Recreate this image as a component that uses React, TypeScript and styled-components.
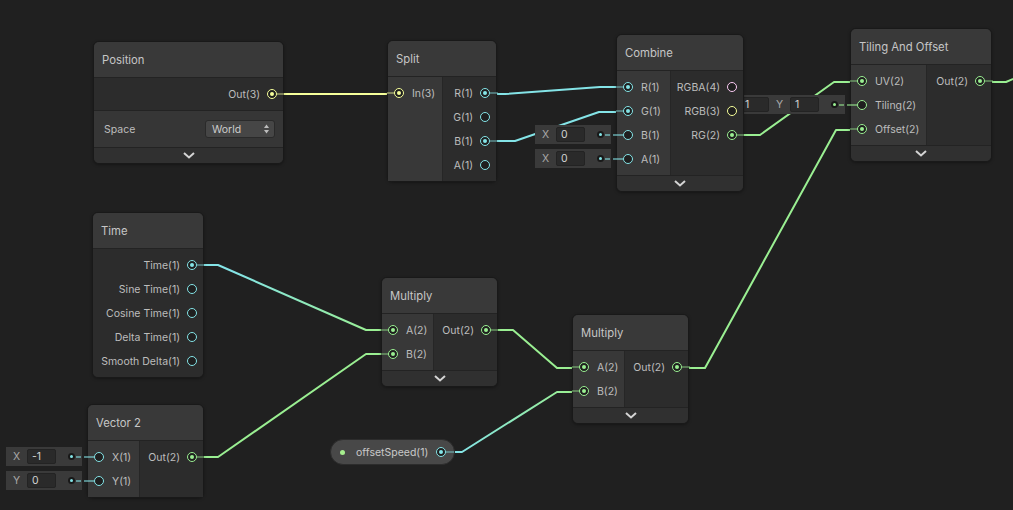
import React from 'react';
import styled, { createGlobalStyle, css } from 'styled-components';

const CYAN = '#84e4e7';
const GREEN = '#9aef92';
const YELLOW = '#f6ff9a';
const PINK = '#fbcbf4';

const GlobalStyle = createGlobalStyle`
  html, body {
    margin: 0;
    padding: 0;
    background: #202020;
  }
  body {
    font-family: Inter, "Noto Sans", sans-serif;
  }
`;

const Canvas = styled.div`
  position: relative;
  width: 1013px;
  height: 510px;
  overflow: hidden;
  background: #202020;
  font-size: 10.5px;
  color: #bdbdbd;
`;

const EdgeLayer = styled.svg`
  position: absolute;
  left: 0;
  top: 0;
`;

const NodeBox = styled.div<{ $x: number; $y: number; $w: number }>`
  position: absolute;
  left: ${({ $x }) => $x}px;
  top: ${({ $y }) => $y}px;
  width: ${({ $w }) => $w}px;
  box-sizing: border-box;
  border: 1px solid #191919;
  border-radius: 6px;
  background: #2e2e2e;
  display: flex;
  flex-direction: column;
  box-shadow: 0 1px 3px rgba(0, 0, 0, 0.35);
`;

const Title = styled.div`
  height: 35px;
  display: flex;
  align-items: center;
  padding-left: 8px;
  background: #393939;
  border-bottom: 1px solid #232323;
  border-radius: 5px 5px 0 0;
  font-size: 11.3px;
  color: #c6c6c6;
`;

const Body = styled.div`
  display: flex;
`;

const InputCol = styled.div<{ $w: number }>`
  width: ${({ $w }) => $w}px;
  flex: none;
  box-sizing: border-box;
  padding: 4px 0;
  background: #383838;
  border-right: 1px solid #262626;
`;

const OutputCol = styled.div<{ $last?: boolean }>`
  flex: 1;
  padding: 4px 0;
  background: #2c2c2c;
  ${({ $last }) =>
    $last &&
    css`
      border-radius: 0 0 5px 5px;
    `}
`;

const InputRow = styled.div`
  position: relative;
  height: 24px;
  display: flex;
  align-items: center;
  gap: 8px;
  padding-left: 6px;
`;

const OutputRow = styled.div`
  height: 24px;
  display: flex;
  align-items: center;
  justify-content: flex-end;
  gap: 7px;
  padding-right: 6px;
`;

const PortRing = styled.span<{ $c: string; $linked?: boolean; $side: 'in' | 'out' }>`
  position: relative;
  flex: none;
  width: 10px;
  height: 10px;
  box-sizing: border-box;
  border-radius: 50%;
  border: 1.5px solid ${({ $c }) => $c};
  background: #1f1f1f;
  display: flex;
  align-items: center;
  justify-content: center;
  &::before {
    content: '';
    width: 4px;
    height: 4px;
    border-radius: 50%;
    background: ${({ $c, $linked }) => ($linked ? $c : 'transparent')};
  }
  ${({ $linked, $c, $side }) =>
    $linked &&
    css`
      &::after {
        content: '';
        position: absolute;
        top: 3px;
        width: 8px;
        height: 2px;
        background: ${$c}66;
        ${$side === 'out' ? 'left: 8.5px;' : 'right: 8.5px;'}
      }
    `}
`;

const FieldBox = styled.div`
  position: absolute;
  right: calc(100% + 6px);
  top: 2px;
  height: 19px;
  display: flex;
  align-items: center;
  padding-right: 7px;
  background: #3a3a3a;
`;

const FieldLabel = styled.span`
  width: 21px;
  text-align: center;
  color: #a8a8a8;
`;

const FieldInput = styled.span`
  width: 29px;
  height: 15px;
  box-sizing: border-box;
  padding-left: 4px;
  line-height: 13px;
  background: #2a2a2a;
  border: 1px solid #232323;
  border-radius: 2px;
  color: #d2d2d2;
`;

const FieldDot = styled.span<{ $c: string }>`
  position: relative;
  margin-left: 12px;
  width: 7px;
  height: 7px;
  border-radius: 50%;
  background: #181818;
  display: flex;
  align-items: center;
  justify-content: center;
  &::before {
    content: '';
    width: 3px;
    height: 3px;
    border-radius: 50%;
    background: ${({ $c }) => $c};
  }
  &::after {
    content: '';
    position: absolute;
    left: 8px;
    top: 2.5px;
    width: 18px;
    height: 2px;
    background: linear-gradient(
      to right,
      ${({ $c }) => $c}88 0 5px,
      transparent 5px 8px,
      ${({ $c }) => $c}88 8px
    );
  }
`;

const SettingsRow = styled.div`
  height: 36px;
  display: flex;
  align-items: center;
  justify-content: space-between;
  padding: 0 8px 0 10px;
  background: #363636;
  border-top: 1px solid #232323;
`;

const Dropdown = styled.div`
  width: 70px;
  height: 18px;
  box-sizing: border-box;
  display: flex;
  align-items: center;
  justify-content: space-between;
  padding: 0 5px 0 6px;
  background: #464646;
  border: 1px solid #2a2a2a;
  border-radius: 3px;
  color: #cccccc;
`;

const CollapseBar = styled.div`
  height: 15px;
  display: flex;
  align-items: center;
  justify-content: center;
  background: #303030;
  border-top: 1px solid #232323;
  border-radius: 0 0 5px 5px;
`;

const Pill = styled.div`
  position: absolute;
  left: 330px;
  top: 439px;
  width: 125px;
  height: 26px;
  box-sizing: border-box;
  display: flex;
  align-items: center;
  padding: 0 8px 0 9px;
  border-radius: 13px;
  background: #484848;
  border: 1px solid #2c2c2c;
`;

const PillDot = styled.span`
  width: 5px;
  height: 5px;
  border-radius: 50%;
  background: #a6ee8e;
  margin-right: 11px;
`;

const PillLabel = styled.span`
  flex: 1;
  color: #c8c8c8;
`;

interface Field {
  label: string;
  value: string;
}

interface PortDef {
  label: string;
  color: string;
  linked?: boolean;
  fields?: Field[];
}

interface NodeProps {
  x: number;
  y: number;
  w: number;
  title: string;
  inW?: number;
  inputs?: PortDef[];
  outputs: PortDef[];
  collapse?: boolean;
  settings?: React.ReactNode;
}

const Chevron = () => (
  <svg width="12" height="7" viewBox="0 0 12 7">
    <polyline points="1,1 6,5.5 11,1" fill="none" stroke="#d4d4d4" strokeWidth="2" />
  </svg>
);

const UpDown = () => (
  <svg width="5" height="10" viewBox="0 0 5 10">
    <polygon points="2.5,0.5 5,4 0,4" fill="#bdbdbd" />
    <polygon points="0,6 5,6 2.5,9.5" fill="#bdbdbd" />
  </svg>
);

const Node: React.FC<NodeProps> = ({ x, y, w, title, inW, inputs, outputs, collapse, settings }) => (
  <NodeBox $x={x} $y={y} $w={w}>
    <Title>{title}</Title>
    <Body>
      {inputs && inW && (
        <InputCol $w={inW}>
          {inputs.map((p) => (
            <InputRow key={p.label}>
              {p.fields && (
                <FieldBox>
                  {p.fields.map((f) => (
                    <React.Fragment key={f.label}>
                      <FieldLabel>{f.label}</FieldLabel>
                      <FieldInput>{f.value}</FieldInput>
                    </React.Fragment>
                  ))}
                  <FieldDot $c={p.color} />
                </FieldBox>
              )}
              <PortRing $c={p.color} $linked={p.linked} $side="in" />
              <span>{p.label}</span>
            </InputRow>
          ))}
        </InputCol>
      )}
      <OutputCol $last={!collapse && !settings && !inputs}>
        {outputs.map((p) => (
          <OutputRow key={p.label}>
            <span>{p.label}</span>
            <PortRing $c={p.color} $linked={p.linked} $side="out" />
          </OutputRow>
        ))}
      </OutputCol>
    </Body>
    {settings}
    {collapse && (
      <CollapseBar>
        <Chevron />
      </CollapseBar>
    )}
  </NodeBox>
);

const Edge: React.FC<{ d: string; stroke: string }> = ({ d, stroke }) => (
  <path d={d} fill="none" stroke={stroke} strokeWidth={2} strokeLinejoin="round" />
);

const Edges = () => (
  <EdgeLayer width={1013} height={510}>
    <defs>
      <linearGradient id="timeGrad" gradientUnits="userSpaceOnUse" x1="192" y1="0" x2="393" y2="0">
        <stop offset="0.2" stopColor={CYAN} />
        <stop offset="0.9" stopColor={GREEN} />
      </linearGradient>
      <linearGradient id="speedGrad" gradientUnits="userSpaceOnUse" x1="436" y1="0" x2="584" y2="0">
        <stop offset="0.15" stopColor={CYAN} />
        <stop offset="0.9" stopColor={GREEN} />
      </linearGradient>
    </defs>
    <Edge d="M272 94 H399" stroke={YELLOW} />
    <Edge d="M485 94 H505 L600 87 H627" stroke={CYAN} />
    <Edge d="M485 141 H515 L599 112 H627" stroke={CYAN} />
    <Edge d="M731 135 H760 L834 82 H862" stroke={GREEN} />
    <Edge d="M979 82 H1006 L1020 76" stroke={GREEN} />
    <Edge d="M192 265 H218 L366 330 H393" stroke="url(#timeGrad)" />
    <Edge d="M192 457 H218 L366 354 H393" stroke={GREEN} />
    <Edge d="M486 330 H513 L557 368 H584" stroke={GREEN} />
    <Edge d="M436 452 H462 L557 392 H584" stroke="url(#speedGrad)" />
    <Edge d="M677 368 H705 L836 130 H862" stroke={GREEN} />
  </EdgeLayer>
);

export default function App() {
  return (
    <Canvas>
      <GlobalStyle />
      <Edges />
      <Node
        x={93}
        y={41}
        w={191}
        title="Position"
        outputs={[{ label: 'Out(3)', color: YELLOW, linked: true }]}
        settings={
          <SettingsRow>
            <span>Space</span>
            <Dropdown>
              <span>World</span>
              <UpDown />
            </Dropdown>
          </SettingsRow>
        }
        collapse
      />
      <Node
        x={387}
        y={40}
        w={110}
        inW={55}
        title="Split"
        inputs={[{ label: 'In(3)', color: YELLOW, linked: true }]}
        outputs={[
          { label: 'R(1)', color: CYAN, linked: true },
          { label: 'G(1)', color: CYAN },
          { label: 'B(1)', color: CYAN, linked: true },
          { label: 'A(1)', color: CYAN },
        ]}
      />
      <Node
        x={850}
        y={28}
        w={142}
        inW={76}
        title="Tiling And Offset"
        inputs={[
          { label: 'UV(2)', color: GREEN, linked: true },
          {
            label: 'Tiling(2)',
            color: GREEN,
            fields: [
              { label: 'X', value: '1' },
              { label: 'Y', value: '1' },
            ],
          },
          { label: 'Offset(2)', color: GREEN, linked: true },
        ]}
        outputs={[{ label: 'Out(2)', color: GREEN, linked: true }]}
        collapse
      />
      <Node
        x={616}
        y={34}
        w={128}
        inW={54}
        title="Combine"
        inputs={[
          { label: 'R(1)', color: CYAN, linked: true },
          { label: 'G(1)', color: CYAN, linked: true },
          { label: 'B(1)', color: CYAN, fields: [{ label: 'X', value: '0' }] },
          { label: 'A(1)', color: CYAN, fields: [{ label: 'X', value: '0' }] },
        ]}
        outputs={[
          { label: 'RGBA(4)', color: PINK },
          { label: 'RGB(3)', color: YELLOW },
          { label: 'RG(2)', color: GREEN, linked: true },
        ]}
        collapse
      />
      <Node
        x={92}
        y={212}
        w={112}
        title="Time"
        outputs={[
          { label: 'Time(1)', color: CYAN, linked: true },
          { label: 'Sine Time(1)', color: CYAN },
          { label: 'Cosine Time(1)', color: CYAN },
          { label: 'Delta Time(1)', color: CYAN },
          { label: 'Smooth Delta(1)', color: CYAN },
        ]}
      />
      <Node
        x={381}
        y={277}
        w={117}
        inW={52}
        title="Multiply"
        inputs={[
          { label: 'A(2)', color: GREEN, linked: true },
          { label: 'B(2)', color: GREEN, linked: true },
        ]}
        outputs={[{ label: 'Out(2)', color: GREEN, linked: true }]}
        collapse
      />
      <Node
        x={572}
        y={314}
        w={117}
        inW={52}
        title="Multiply"
        inputs={[
          { label: 'A(2)', color: GREEN, linked: true },
          { label: 'B(2)', color: GREEN, linked: true },
        ]}
        outputs={[{ label: 'Out(2)', color: GREEN, linked: true }]}
        collapse
      />
      <Node
        x={87}
        y={404}
        w={117}
        inW={52}
        title="Vector 2"
        inputs={[
          { label: 'X(1)', color: CYAN, fields: [{ label: 'X', value: '-1' }] },
          { label: 'Y(1)', color: CYAN, fields: [{ label: 'Y', value: '0' }] },
        ]}
        outputs={[{ label: 'Out(2)', color: GREEN, linked: true }]}
      />
      <Pill>
        <PillDot />
        <PillLabel>offsetSpeed(1)</PillLabel>
        <PortRing $c={CYAN} $linked $side="out" />
      </Pill>
    </Canvas>
  );
}
